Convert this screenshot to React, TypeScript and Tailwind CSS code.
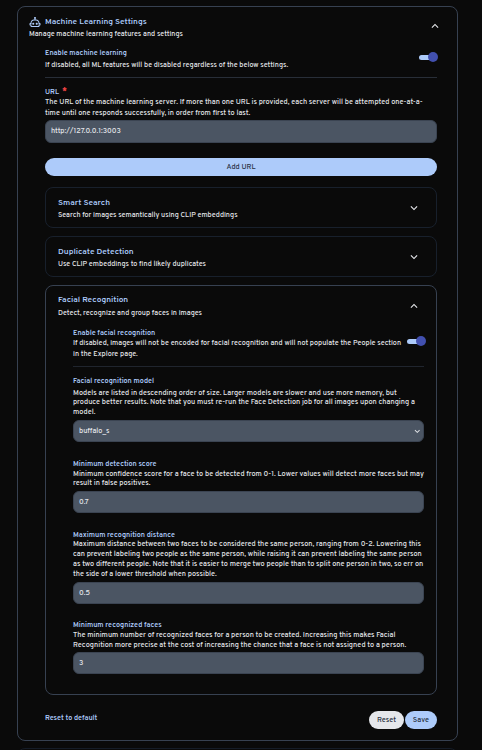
import React from "react";

type Children = { children: React.ReactNode; className?: string };

const Title = ({ children }: Children) => (
  <h2 className="h-[10px] text-[8.3px] leading-[10px] font-semibold whitespace-nowrap text-[#adcbfa]">{children}</h2>
);

const Label = ({ children, className = "" }: Children) => (
  <div className={`h-[10px] text-[7.2px] leading-[11px] font-semibold whitespace-nowrap text-[#adcbfa] ${className}`}>{children}</div>
);

const Text = ({ lines, className = "text-[7.2px] leading-[10px]" }: { lines: string[]; className?: string }) => (
  <p className={`-mb-[0.5px] pt-[0.5px] font-medium whitespace-nowrap text-[#e5e7eb] ${className}`}>
    {lines.map((line) => (
      <span key={line} className="block">{line}</span>
    ))}
  </p>
);

const Field = ({ children, className = "" }: Children) => (
  <div className={`flex items-center justify-between rounded-[6px] border border-[#3b4452] bg-[#4b5563] pt-[2px] pr-[3px] pl-[5px] text-[7.3px] font-medium text-[#e5e7eb] ${className}`}>
    {children}
  </div>
);

const Toggle = ({ className = "" }: { className?: string }) => (
  <div className={`flex h-[10px] w-[19px] shrink-0 items-center justify-end ${className}`}>
    <div className="-mr-[2px] h-[5px] w-[11px] rounded-l-full bg-[#adcbfa]" />
    <div className="h-[10px] w-[10px] rounded-full bg-[#4250af]" />
  </div>
);

const Down = ({ className = "h-[14px] w-[14px]" }: { className?: string }) => (
  <svg viewBox="0 0 24 24" className={`shrink-0 fill-[#e5e7eb] ${className}`}>
    <path d="M7.41 8.58 12 13.17l4.59-4.59L18 10l-6 6-6-6z" />
  </svg>
);

const Up = ({ className = "" }: { className?: string }) => (
  <svg viewBox="0 0 24 24" className={`h-[14px] w-[14px] shrink-0 fill-[#e5e7eb] ${className}`}>
    <path d="M7.41 15.41 12 10.83l4.59 4.58L18 14l-6-6-6 6z" />
  </svg>
);

const Collapsed = ({ title, text, className = "" }: { title: string; text: string; className?: string }) => (
  <section className={`flex h-[41px] items-center justify-between rounded-[8px] border border-[#18202c] pt-[3px] pr-[15px] pl-[12px] ${className}`}>
    <div>
      <Title>{title}</Title>
      <div className="h-[3px]" />
      <Text lines={[text]} />
    </div>
    <Down className="-mt-[3px] h-[14px] w-[14px]" />
  </section>
);

export default function App() {
  return (
    <main className="h-[750px] w-[482px] overflow-hidden bg-[#0a0a0a] pt-[6px] pl-[17px] font-['Overpass','Roboto',sans-serif]">
      <section className="h-[735px] w-[441px] rounded-[8px] border border-[#374151] pt-[9px] pr-[20px] pl-[11px]">
        <div className="flex h-[23px] justify-between">
          <div>
            <div className="flex h-[11px] items-center">
              <svg viewBox="0 0 24 24" className="mr-[4px] h-[12px] w-[12px] shrink-0 fill-[#adcbfa]">
                <path d="M17.5 15.5c0 1.11-.89 2-2 2s-2-.89-2-2 .9-2 2-2 2 .9 2 2m-9-2c-1.1 0-2 .9-2 2s.9 2 2 2 2-.89 2-2-.89-2-2-2M23 15v3c0 .55-.45 1-1 1h-1v1c0 1.11-.89 2-2 2H5a2 2 0 0 1-2-2v-1H2c-.55 0-1-.45-1-1v-3c0-.55.45-1 1-1h1c0-3.87 3.13-7 7-7h1V5.73c-.6-.34-1-.99-1-1.73 0-1.1.9-2 2-2s2 .9 2 2c0 .74-.4 1.39-1 1.73V7h1c3.87 0 7 3.13 7 7h1c.55 0 1 .45 1 1m-2 1h-2v-2c0-2.76-2.24-5-5-5h-4c-2.76 0-5 2.24-5 5v2H3v1h2v3h14v-3h2z" />
              </svg>
              <Title>Machine Learning Settings</Title>
            </div>
            <div className="h-[2px]" />
            <Text lines={["Manage machine learning features and settings"]} />
          </div>
          <Up className="mt-[3px] -mr-[4.5px]" />
        </div>

        <div className="ml-[16px]">
          <div className="flex h-[39px] justify-between border-b border-[#282e38] pt-[9px]">
            <div>
              <Label>Enable machine learning</Label>
              <div className="h-[2px]" />
              <Text lines={["If disabled, all ML features will be disabled regardless of the below settings."]} />
            </div>
            <Toggle className="mt-[4px] -mr-[0.5px]" />
          </div>

          <Label className="mt-[9px] flex">
            URL
            <span className="ml-[3px] h-[9px] text-[9px] leading-[10px] font-bold text-[#ef4444]">*</span>
          </Label>
          <Text
            lines={[
              "The URL of the machine learning server. If more than one URL is provided, each server will be attempted one-at-a-",
              "time until one responds successfully, in order from first to last.",
            ]}
            className="mt-[0.5px] text-[7.32px] leading-[10.5px]"
          />
          <Field className="mt-[1.5px] h-[23px]">http://127.0.0.1:3003</Field>
          <button className="mt-[15px] block h-[18px] w-full rounded-full bg-[#adcbfa] pt-[2px] text-[7.3px] font-medium text-[#27303e]">Add URL</button>

          <Collapsed className="mt-[11px]" title="Smart Search" text="Search for images semantically using CLIP embeddings" />
          <Collapsed className="mt-[8px]" title="Duplicate Detection" text="Use CLIP embeddings to find likely duplicates" />

          <section className="mt-[8px] h-[410px] rounded-[8px] border border-[#374151] pt-[9px] pr-[12px] pl-[12px]">
            <div className="flex h-[24px] justify-between">
              <div>
                <Title>Facial Recognition</Title>
                <div className="h-[3px]" />
                <Text lines={["Detect, recognize and group faces in images"]} />
              </div>
              <Up className="mt-[4px] mr-[3px]" />
            </div>
            <div className="ml-[15px]">
              <div className="flex h-[48px] justify-between border-b border-[#20252e] pt-[9px]">
                <div>
                  <Label>Enable facial recognition</Label>
                  <div className="h-[0.5px]" />
                  <Text
                    lines={["If disabled, images will not be encoded for facial recognition and will not populate the People section", "in the Explore page."]}
                    className="text-[7.23px] leading-[10.5px]"
                  />
                </div>
                <Toggle className="mt-[8px] -mr-[1.5px]" />
              </div>

              <Label className="mt-[9px]">Facial recognition model</Label>
              <Text
                lines={[
                  "Models are listed in descending order of size. Larger models are slower and use more memory, but",
                  "produce better results. Note that you must re-run the Face Detection job for all images upon changing a",
                  "model.",
                ]}
                className="mt-[2px] text-[7.32px] leading-[9.7px]"
              />
              <Field className="mt-[2.9px] h-[22px]">
                buffalo_s
                <Down className="-mt-[2px] -mr-[2px] h-[10.5px] w-[10.5px]" />
              </Field>

              <Label className="mt-[17px]">Minimum detection score</Label>
              <Text
                lines={["Minimum confidence score for a face to be detected from 0-1. Lower values will detect more faces but may", "result in false positives."]}
                className="text-[7.32px] leading-[9.8px]"
              />
              <Field className="mt-[2.4px] h-[22px]">0.7</Field>

              <Label className="mt-[17px]">Maximum recognition distance</Label>
              <Text
                lines={[
                  "Maximum distance between two faces to be considered the same person, ranging from 0-2. Lowering this",
                  "can prevent labeling two people as the same person, while raising it can prevent labeling the same person",
                  "as two different people. Note that it is easier to merge two people than to split one person in two, so err on",
                  "the side of a lower threshold when possible.",
                ]}
                className="text-[7.32px] leading-[9.8px]"
              />
              <Field className="mt-[2.8px] h-[22px]">0.5</Field>

              <Label className="mt-[16px]">Minimum recognized faces</Label>
              <Text
                lines={["The minimum number of recognized faces for a person to be created. Increasing this makes Facial", "Recognition more precise at the cost of increasing the chance that a face is not assigned to a person."]}
                className="mt-[0.5px] text-[7.32px] leading-[9.8px]"
              />
              <Field className="mt-[1.9px] h-[22.5px]">3</Field>
            </div>
          </section>

          <div className="mt-[16px] flex h-[18px] items-center">
            <Label className="mb-[3.5px]">Reset to default</Label>
            <button className="ml-auto h-[18px] w-[35px] rounded-full bg-[#e5e7eb] pt-[1.5px] text-[7.4px] font-medium text-[#27303e]">Reset</button>
            <button className="ml-px h-[18px] w-[32px] rounded-full bg-[#adcbfa] pt-[1.5px] text-[7.4px] font-medium text-[#27303e]">Save</button>
          </div>
        </div>
      </section>
      <section className="mt-[7px] h-[20px] w-[441px] rounded-t-[8px] border border-[#151c27]" />
    </main>
  );
}
